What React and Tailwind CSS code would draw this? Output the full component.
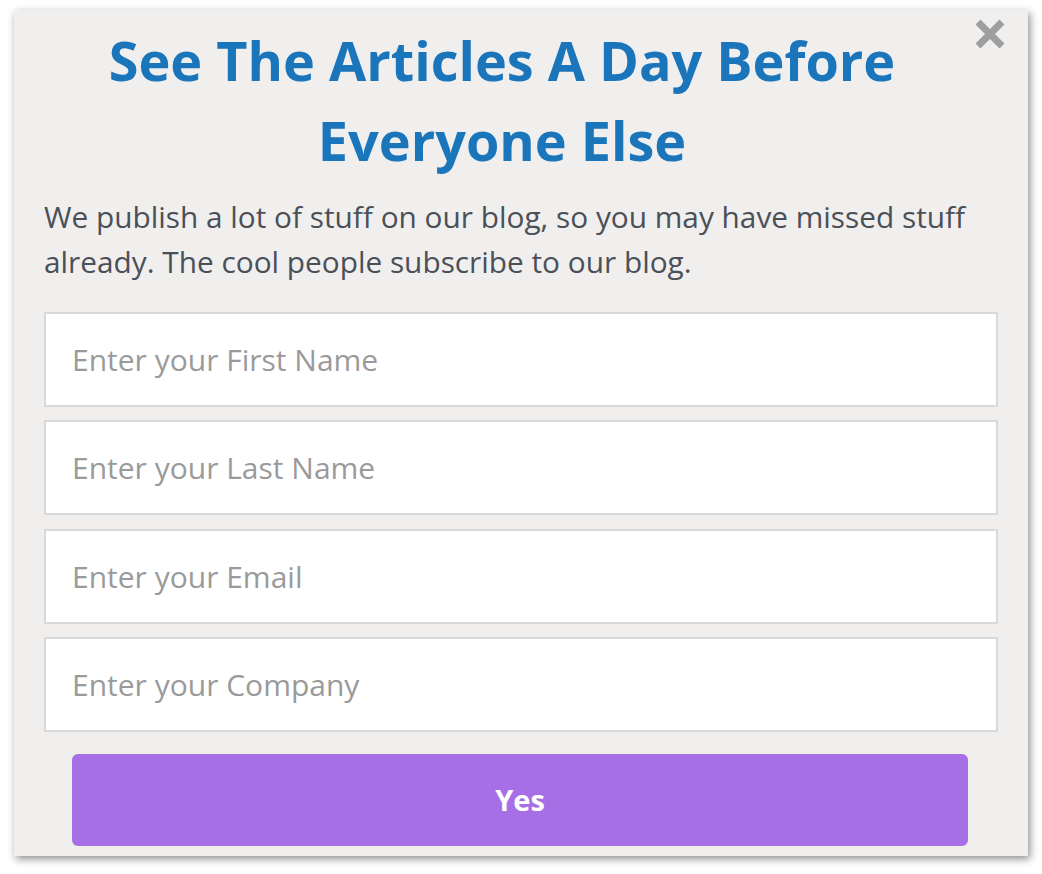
import React from "react";

export default function App() {
  const fields = [
    "Enter your First Name",
    "Enter your Last Name",
    "Enter your Email",
    "Enter your Company",
  ];
  return (
    <div className="w-[1042px] h-[874px] bg-white pt-[10px] pl-[14px]" style={{ fontFamily: '"Open Sans", sans-serif' }}>
      <div className="relative w-[1014px] h-[846px] bg-[#f0efee] shadow-[2px_3px_8px_rgba(0,0,0,0.45)] px-[30px] pt-[10px]">
        <button className="absolute right-[20px] top-[6px] w-[36px] h-[36px] flex items-center justify-center">
          <svg width="32" height="32" viewBox="0 0 32 32">
            <path d="M4 4 L28 28 M28 4 L4 28" stroke="#9e9e9e" strokeWidth="7" strokeLinecap="butt" />
          </svg>
        </button>
        <h1 className="pr-[38px] text-center text-[54px] leading-[80px] font-bold text-[#1a75bb]">
          See The Articles A Day Before Everyone Else
        </h1>
        <p className="mt-[14px] text-[29.8px] leading-[45px] text-[#4b5058]">
          We publish a lot of stuff on our blog, so you may have missed stuff already. The cool people subscribe to our blog.
        </p>
        <div className="mt-[28px] flex flex-col gap-[13.33px]">
          {fields.map((f) => (
            <input
              key={f}
              placeholder={f}
              className="h-[95px] w-full bg-white border-2 border-[#d9d9d9] pl-[26px] text-[30px] text-[#555] placeholder:text-[#9a9a9a] outline-none"
            />
          ))}
        </div>
        <div className="mt-[22px] pl-[28px] pr-[30px]">
          <button className="w-full h-[92px] rounded-[6px] bg-[#a66fe6] text-white font-bold text-[29px]">
            Yes
          </button>
        </div>
      </div>
    </div>
  );
}
